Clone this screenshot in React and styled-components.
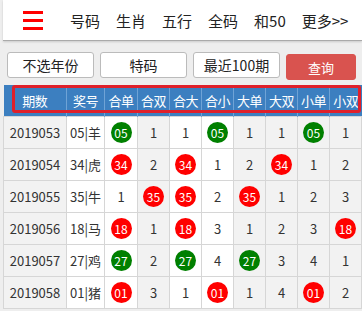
import styled, { createGlobalStyle } from "styled-components";

const GlobalStyle = createGlobalStyle`
  body {
    margin: 0;
    background: #eeeeee;
    font-family: "Noto Sans CJK SC", "Noto Sans", sans-serif;
  }
`;

const Page = styled.div`
  width: 362px;
  height: 311px;
  overflow: hidden;
  padding-left: 3px;
  box-sizing: border-box;
`;

const NavBar = styled.div`
  height: 40px;
  background: #fff;
  border-bottom: 1px solid #aaa;
  display: flex;
  align-items: center;
  box-shadow: 0 1px 2px rgba(0, 0, 0, 0.15);
`;

const Burger = styled.div`
  flex-shrink: 0;
  width: 20px;
  margin: 0 27px 0 20px;
  display: flex;
  flex-direction: column;
  gap: 5px;
  span {
    display: block;
    height: 3px;
    background: #f00;
  }
`;

const NavItem = styled.span`
  flex-shrink: 0;
  font-size: 15px;
  color: #222;
  margin-right: 16px;
  white-space: nowrap;
`;

const Filters = styled.div`
  display: flex;
  gap: 6px;
  padding: 11px 0 0 4px;
  height: 44px;
  box-sizing: border-box;
`;

const FilterBtn = styled.button`
  width: ${(p) => p.$w || 87}px;
  height: 26px;
  border: 1px solid #bbb;
  border-radius: 3px;
  background: ${(p) => (p.$primary ? "#d9534f" : "#fff")};
  border-color: ${(p) => (p.$primary ? "#d9534f" : "#bbb")};
  color: ${(p) => (p.$primary ? "#fff" : "#222")};
  font-family: inherit;
  font-size: ${(p) => (p.$primary ? 13 : 14)}px;
  padding: 0;
  margin-top: ${(p) => (p.$primary ? 2 : 0)}px;
`;

const TableWrap = styled.div`
  position: relative;
`;

const Outline = styled.div`
  position: absolute;
  left: 9px;
  top: 0;
  width: 349px;
  height: 28px;
  border: 3px solid #e0202a;
  border-radius: 3px;
  box-sizing: border-box;
  pointer-events: none;
`;

const Table = styled.table`
  border-collapse: collapse;
  table-layout: fixed;
  width: 358px;
  font-size: 13px;
`;

const Th = styled.th`
  height: 31px;
  background: #3c7fc0;
  color: #fff;
  font-weight: normal;
  font-size: 13px;
  letter-spacing: -0.5px;
  text-align: center;
  padding: 0;
  border-left: 1px solid #6fa3d6;
  &:first-child {
    border-left: none;
  }
`;

const Td = styled.td`
  height: 31px;
  padding: 0;
  text-align: center;
  color: #333;
  background: ${(p) => (p.$gray ? "#f2f2f2" : "#fff")};
  border: 1px solid #d6d6d6;
`;

const Ball = styled.span`
  display: inline-flex;
  align-items: center;
  justify-content: center;
  width: 21px;
  height: 21px;
  border-radius: 50%;
  background: ${(p) => (p.$color === "g" ? "#008000" : "#f00")};
  color: #fff;
  font-size: 12px;
`;

const heads = ["期数", "奖号", "合单", "合双", "合大", "合小", "大单", "大双", "小单", "小双"];
const widths = [63, 38, 33, 32, 32, 32, 32, 32, 32, 32];
const grayCols = [true, false, false, true, false, false, true, true, true, true];

const rows = [
  ["2019053", "05|羊", "g", ["*", 1, 1, "*", 1, 1, "*", 1]],
  ["2019054", "34|虎", "r", ["*", 2, "*", 1, 2, "*", 1, 2]],
  ["2019055", "35|牛", "r", [1, "*", "*", 2, "*", 1, 2, 3]],
  ["2019056", "18|马", "r", ["*", 1, "*", 3, 1, 2, 3, "*"]],
  ["2019057", "27|鸡", "g", ["*", 2, "*", 4, "*", 3, 4, 1]],
  ["2019058", "01|猪", "r", ["*", 3, 1, "*", 1, 4, "*", 2]],
];

export default function App() {
  return (
    <Page>
      <GlobalStyle />
      <NavBar>
        <Burger>
          <span />
          <span />
          <span />
        </Burger>
        <NavItem>号码</NavItem>
        <NavItem>生肖</NavItem>
        <NavItem>五行</NavItem>
        <NavItem>全码</NavItem>
        <NavItem>和50</NavItem>
        <NavItem>更多&gt;&gt;</NavItem>
      </NavBar>
      <Filters>
        <FilterBtn>不选年份</FilterBtn>
        <FilterBtn>特码</FilterBtn>
        <FilterBtn>最近100期</FilterBtn>
        <FilterBtn $primary $w={70}>查询</FilterBtn>
      </Filters>
      <TableWrap>
        <Table>
          <colgroup>
            {widths.map((w, i) => (
              <col key={i} style={{ width: w }} />
            ))}
          </colgroup>
          <thead>
            <tr>
              {heads.map((h) => (
                <Th key={h}>{h}</Th>
              ))}
            </tr>
          </thead>
          <tbody>
            {rows.map(([issue, num, color, vals]) => {
              const n = num.slice(0, 2);
              return (
                <tr key={issue}>
                  <Td $gray>{issue}</Td>
                  <Td>{num}</Td>
                  {vals.map((v, i) => (
                    <Td key={i} $gray={grayCols[i + 2]}>
                      {v === "*" ? <Ball $color={color}>{n}</Ball> : v}
                    </Td>
                  ))}
                </tr>
              );
            })}
          </tbody>
        </Table>
        <Outline />
      </TableWrap>
    </Page>
  );
}
